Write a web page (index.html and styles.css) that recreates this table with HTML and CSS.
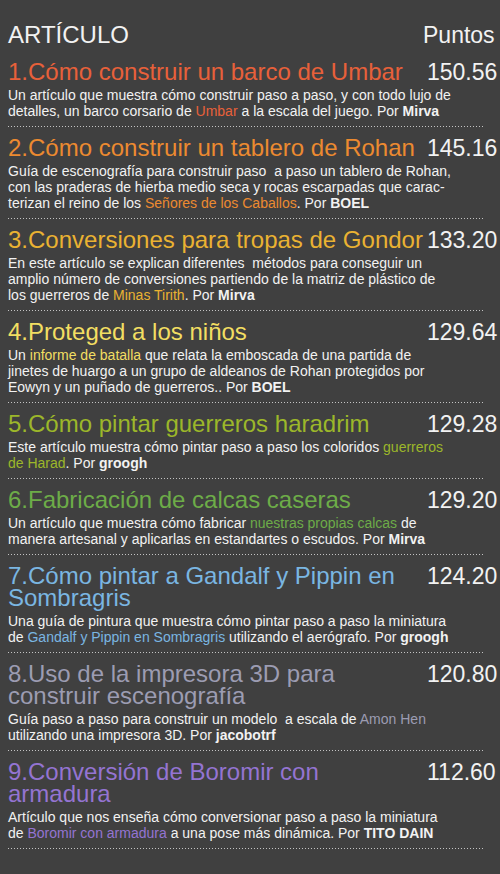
FILE: index.html
```html
<!DOCTYPE html>
<html lang="es">
<head>
    <meta charset="UTF-8">
    <title>Ranking de artículos</title>
    <link rel="stylesheet" href="styles.css">
</head>
<body>
    <div class="ranking">
        <div class="head">
            <span>ARTÍCULO</span>
            <span class="points">Puntos</span>
        </div>

        <div class="item c1">
            <div class="top">
                <h2>1.Cómo construir un barco de Umbar</h2>
                <span class="points">150.56</span>
            </div>
            <p>Un artículo que muestra cómo construir paso a paso, y con todo lujo de detalles, un barco corsario de <a>Umbar</a> a la escala del juego. Por <b>Mirva</b></p>
        </div>

        <div class="item c2">
            <div class="top">
                <h2>2.Cómo construir un tablero de Rohan</h2>
                <span class="points">145.16</span>
            </div>
            <p>Guía de escenografía para construir paso &nbsp;a paso un tablero de Rohan, con las praderas de hierba medio seca y rocas escarpadas que carac-terizan el reino de los <a>Señores de los Caballos</a>. Por <b>BOEL</b></p>
        </div>

        <div class="item c3">
            <div class="top">
                <h2>3.Conversiones para tropas de Gondor</h2>
                <span class="points">133.20</span>
            </div>
            <p>En este artículo se explican diferentes &nbsp;métodos para conseguir un amplio número de conversiones partiendo de la matriz de plástico de los guerreros de <a>Minas Tirith</a>. Por <b>Mirva</b></p>
        </div>

        <div class="item c4">
            <div class="top">
                <h2>4.Proteged a los niños</h2>
                <span class="points">129.64</span>
            </div>
            <p>Un <a>informe de batalla</a> que relata la emboscada de una partida de jinetes de huargo a un grupo de aldeanos de Rohan protegidos por Eowyn y un puñado de guerreros.. Por <b>BOEL</b></p>
        </div>

        <div class="item c5">
            <div class="top">
                <h2>5.Cómo pintar guerreros haradrim</h2>
                <span class="points">129.28</span>
            </div>
            <p>Este artículo muestra cómo pintar paso a paso los coloridos <a>guerreros de Harad</a>. Por <b>groogh</b></p>
        </div>

        <div class="item c6">
            <div class="top">
                <h2>6.Fabricación de calcas caseras</h2>
                <span class="points">129.20</span>
            </div>
            <p>Un artículo que muestra cómo fabricar <a>nuestras propias calcas</a> de manera artesanal y aplicarlas en estandartes o escudos. Por <b>Mirva</b></p>
        </div>

        <div class="item c7">
            <div class="top">
                <h2>7.Cómo pintar a Gandalf y Pippin en Sombragris</h2>
                <span class="points">124.20</span>
            </div>
            <p>Una guía de pintura que muestra cómo pintar paso a paso la miniatura de <a>Gandalf y Pippin en Sombragris</a> utilizando el aerógrafo. Por <b>groogh</b></p>
        </div>

        <div class="item c8">
            <div class="top">
                <h2>8.Uso de la impresora 3D para construir escenografía</h2>
                <span class="points">120.80</span>
            </div>
            <p>Guía paso a paso para construir un modelo &nbsp;a escala de <a>Amon Hen</a> utilizando una impresora 3D. Por <b>jacobotrf</b></p>
        </div>

        <div class="item c9">
            <div class="top">
                <h2>9.Conversión de Boromir con armadura</h2>
                <span class="points">112.60</span>
            </div>
            <p>Artículo que nos enseña cómo conversionar paso a paso la miniatura de <a>Boromir con armadura</a> a una pose más dinámica. Por <b>TITO DAIN</b></p>
        </div>
    </div>
</body>
</html>
```

FILE: styles.css
```css
body {
    margin: 0;
    background-color: #404040;
    color: #f2f2f2;
    font-family: "Liberation Sans", Arial, sans-serif;
}
.ranking {
    padding: 22px 0 0 8px;
}
.head {
    display: flex;
    justify-content: space-between;
    font-size: 24px;
    line-height: 26px;
    margin-bottom: 13px;
}
.head .points {
    width: 77px;
    font-size: 23px;
}
.item {
    position: relative;
    width: 476px;
    padding-bottom: 8px;
    margin-bottom: 10px;
}
.item::after {
    content: "";
    position: absolute;
    left: 0;
    right: 0;
    bottom: 0;
    height: 1px;
    background-image: linear-gradient(to right, #c4c4c4 1px, transparent 1px);
    background-size: 3px 1px;
}
.top {
    display: flex;
    align-items: flex-start;
    width: 492px;
}
.top h2 {
    flex: 1;
    margin: 0;
    font-size: 24px;
    font-weight: normal;
    line-height: 22px;
}
.top .points {
    width: 73px;
    font-size: 23px;
    line-height: 22px;
    color: #f2f2f2;
}
.item p {
    width: 445px;
    margin: 4px 0 0;
    font-size: 14px;
    line-height: 16px;
}
.item a {
    text-decoration: none;
}
.c1 h2, .c1 a { color: #e8603a; }
.c2 h2, .c2 a { color: #ec8a30; }
.c3 h2, .c3 a { color: #eab232; }
.c4 h2, .c4 a { color: #f2de62; }
.c5 h2, .c5 a { color: #9cb72a; }
.c6 h2, .c6 a { color: #6dac48; }
.c7 h2, .c7 a { color: #7ab6e2; }
.c8 h2, .c8 a { color: #9c9cb2; }
.c9 h2, .c9 a { color: #9474d2; }
```
